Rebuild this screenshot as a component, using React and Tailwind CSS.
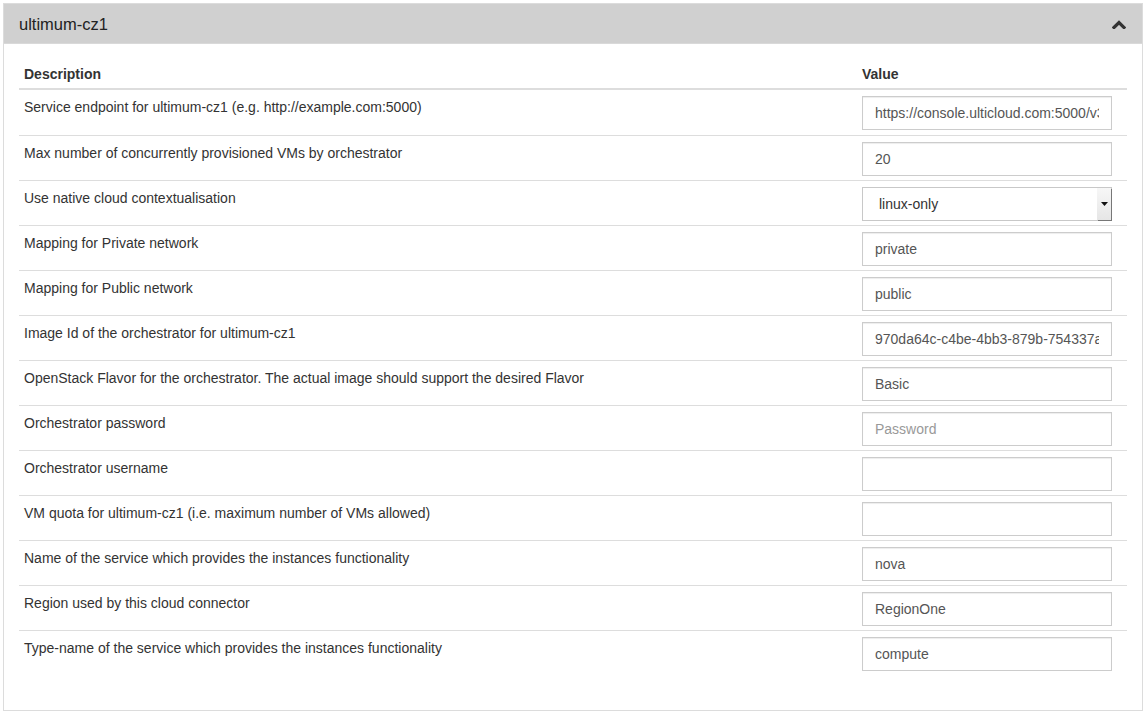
import { useState } from 'react'

const rows = [
    { label: 'Service endpoint for ultimum-cz1 (e.g. http://example.com:5000)', value: 'https://console.ulticloud.com:5000/v3' },
    { label: 'Max number of concurrently provisioned VMs by orchestrator', value: '20' },
    { label: 'Use native cloud contextualisation', select: 'linux-only' },
    { label: 'Mapping for Private network', value: 'private' },
    { label: 'Mapping for Public network', value: 'public' },
    { label: 'Image Id of the orchestrator for ultimum-cz1', value: '970da64c-c4be-4bb3-879b-754337a1c2f0' },
    { label: 'OpenStack Flavor for the orchestrator. The actual image should support the desired Flavor', value: 'Basic' },
    { label: 'Orchestrator password', value: '', placeholder: 'Password', type: 'password' },
    { label: 'Orchestrator username', value: '' },
    { label: 'VM quota for ultimum-cz1 (i.e. maximum number of VMs allowed)', value: '' },
    { label: 'Name of the service which provides the instances functionality', value: 'nova' },
    { label: 'Region used by this cloud connector', value: 'RegionOne' },
    { label: 'Type-name of the service which provides the instances functionality', value: 'compute' },
]

function ChevronUp() {
    return (
        <svg width="14" height="10" viewBox="0 0 14 10" className="block">
            <polyline points="2,8.5 7,3.5 12,8.5" fill="none" stroke="#333" strokeWidth="3.2" strokeLinecap="square" />
        </svg>
    )
}

function FakeSelect({ value }) {
    return (
        <div className="flex h-[34px] w-[250px] items-stretch border border-[#c8c8c8] bg-white">
            <div className="flex flex-1 items-center pl-[16px] text-[14px] text-[#333]">{value}</div>
            <div className="flex w-[14px] items-center justify-center bg-gradient-to-b from-[#f7f7f7] to-[#e6e6e6] shadow-[1px_1px_0_#777]">
                <svg width="7" height="4" viewBox="0 0 7 4"><polygon points="0,0 7,0 3.5,4" fill="#111" /></svg>
            </div>
        </div>
    )
}

export default function App() {
    const [open, setOpen] = useState(true)

    return (
        <div className="min-h-[715px] bg-white p-[3px] pr-[5px] font-['Liberation_Sans',Arial,sans-serif] text-[14px] leading-[20px] text-[#333]">
            <div className="border border-[#dcdcdc]">
                {/* Panel heading */}
                <div className="flex h-[40px] items-center justify-between border-b border-[#d9d9d9] bg-[#d0d0d0] pl-[15px] pr-[16px]">
                    <span className="text-[16.5px] text-[#222]">ultimum-cz1</span>
                    <button onClick={() => setOpen(!open)} className="p-0">
                        <ChevronUp />
                    </button>
                </div>

                {/* Panel body */}
                <div className="px-[15px] pb-[35px]">
                    <div className="w-[1108px]">
                        <div className="flex border-b-2 border-[#dddddd] pt-[20px] pb-[4px] font-bold">
                            <div className="w-[838px] pl-[5px]">Description</div>
                            <div className="pl-[5px]">Value</div>
                        </div>
                        {rows.map((row, i) => (
                            <div
                                key={row.label}
                                className={`flex h-[45px] ${i > 0 ? 'border-t border-[#dddddd]' : ''}`}
                            >
                                <div className="w-[838px] pl-[5px] pt-[7px]">{row.label}</div>
                                <div className="pl-[5px] pt-[6px]">
                                    {row.select ? (
                                        <FakeSelect value={row.select} />
                                    ) : (
                                        <input
                                            type={row.type || 'text'}
                                            readOnly
                                            value={row.value}
                                            placeholder={row.placeholder}
                                            className="block h-[34px] w-[250px] border border-[#cccccc] bg-white px-[12px] text-[14px] text-[#555] shadow-[inset_0_1px_1px_rgba(0,0,0,0.075)] placeholder:text-[#999] focus:outline-none"
                                        />
                                    )}
                                </div>
                            </div>
                        ))}
                    </div>
                </div>
            </div>
        </div>
    )
}
